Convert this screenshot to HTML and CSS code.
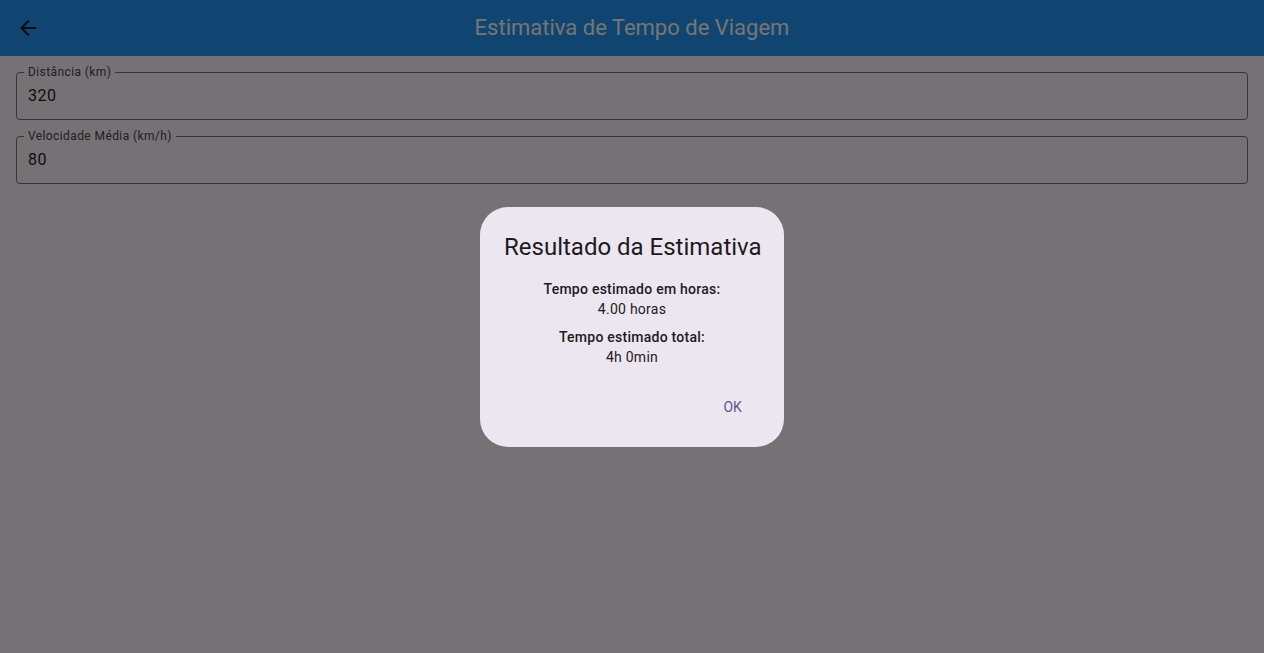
FILE: index.html
```html
<!DOCTYPE html>
<html lang="pt">
<head>
<meta charset="utf-8">
<title>Estimativa de Tempo de Viagem</title>
<link rel="stylesheet" href="styles.css">
</head>
<body>
<header class="appbar">
  <button class="back" aria-label="Voltar">
    <svg width="24" height="24" viewBox="0 0 24 24"><path d="M20 11H7.83l5.59-5.59L12 4l-8 8 8 8 1.41-1.41L7.83 13H20v-2z" fill="#1d1b20"/></svg>
  </button>
  <h1 class="title">Estimativa de Tempo de Viagem</h1>
</header>
<main class="form">
  <div class="field">
    <span class="label">Distância (km)</span>
    <span class="value">320</span>
  </div>
  <div class="field">
    <span class="label">Velocidade Média (km/h)</span>
    <span class="value">80</span>
  </div>
</main>
<div class="barrier">
  <div class="dialog">
    <h2 class="dlg-title">Resultado da Estimativa</h2>
    <div class="dlg-content">
      <p class="k">Tempo estimado em horas:</p>
      <p class="v">4.00 horas</p>
      <p class="k k2">Tempo estimado total:</p>
      <p class="v">4h 0min</p>
    </div>
    <div class="actions">
      <button class="ok">OK</button>
    </div>
  </div>
</div>
</body>
</html>
```
FILE: styles.css
```css
* { box-sizing: border-box; }
html, body { margin: 0; padding: 0; }
body {
  background: #fef7ff;
  font-family: Roboto, "Noto Sans", sans-serif;
  width: 1264px;
  height: 653px;
  overflow: hidden;
}
.appbar {
  height: 56px;
  background: #2196f3;
  display: flex;
  align-items: center;
  position: relative;
}
.back {
  border: 0;
  background: none;
  padding: 0;
  margin-left: 16px;
  width: 24px;
  height: 24px;
  display: flex;
}
.title {
  flex: 1;
  margin: 0 40px 0 0;
  text-align: center;
  color: #fff;
  font-size: 22px;
  font-weight: 400;
  line-height: 28px;
}
.form {
  padding: 16px;
  display: flex;
  flex-direction: column;
  gap: 16px;
}
.field {
  position: relative;
  height: 48px;
  border: 1px solid #79747e;
  border-radius: 4px;
  display: flex;
  align-items: center;
  padding: 0 11px;
}
.label {
  position: absolute;
  left: 7px;
  top: -9px;
  padding: 0 4px;
  background: #fef7ff;
  color: #49454f;
  font-size: 12px;
  line-height: 16px;
  letter-spacing: 0.4px;
}
.value {
  color: #1d1b20;
  font-size: 16px;
  line-height: 24px;
  letter-spacing: 0.5px;
}
.barrier {
  position: fixed;
  inset: 0;
  background: rgba(0, 0, 0, 0.54);
  display: flex;
  align-items: center;
  justify-content: center;
}
.dialog {
  background: #ece6f0;
  border-radius: 28px;
  padding: 24px 24px 20px;
  width: 304px;
}
.dlg-title {
  margin: 0;
  font-size: 24px;
  font-weight: 400;
  line-height: 32px;
  color: #1d1b20;
  text-align: center;
  white-space: nowrap;
}
.dlg-content {
  margin-top: 16px;
  text-align: center;
  color: #1d1b20;
  font-size: 14px;
  line-height: 20px;
  letter-spacing: 0.25px;
}
.dlg-content p { margin: 0; }
.k { font-weight: 500; }
.k2 { margin-top: 8px !important; }
.v { color: #1d1b20; }
.actions {
  margin-top: 20px;
  display: flex;
  justify-content: flex-end;
}
.ok {
  border: 0;
  background: none;
  height: 40px;
  padding: 0 18px;
  font-family: Roboto, sans-serif;
  font-size: 14px;
  font-weight: 400;
  letter-spacing: 0.1px;
  color: #65558f;
  border-radius: 20px;
}
```
